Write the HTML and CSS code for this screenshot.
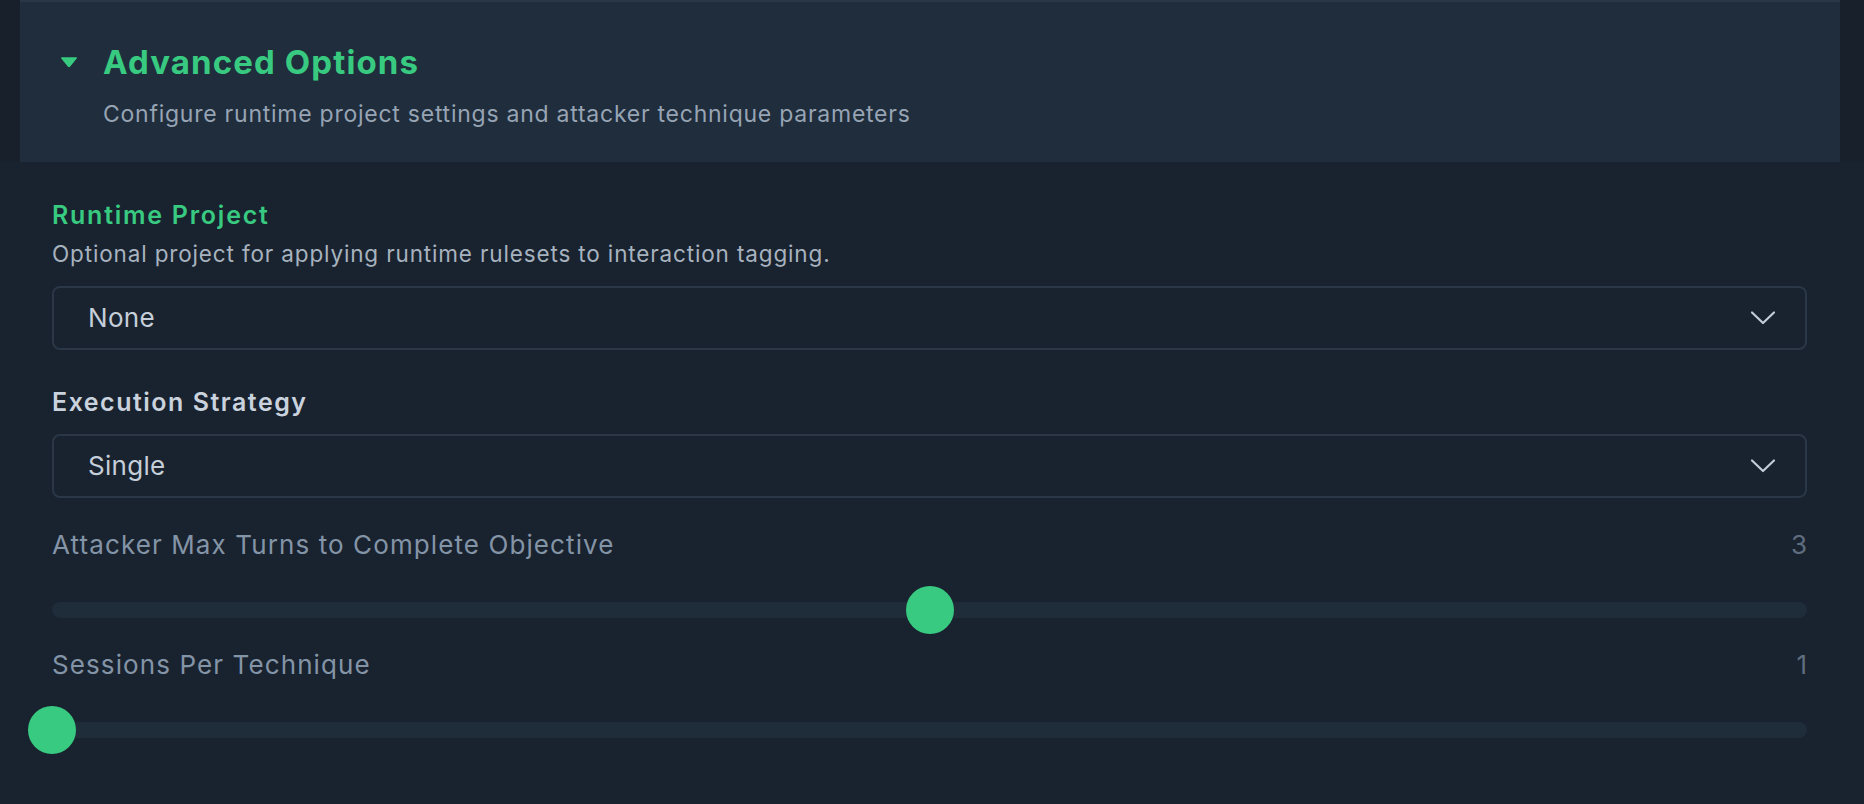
FILE: index.html
```html
<!DOCTYPE html>
<html lang="en">
<head>
<meta charset="utf-8">
<title>Advanced Options</title>
<link rel="stylesheet" href="styles.css">
</head>
<body>
<div class="page">
  <div class="header-wrap">
    <section class="header">
      <div class="header-title-row">
        <svg class="caret" width="18" height="12" viewBox="0 0 18 12" aria-hidden="true">
          <path d="M2 1.2 H16 Q17.6 1.2 16.7 2.6 L10.2 10.6 Q9 12 7.8 10.6 L1.3 2.6 Q0.4 1.2 2 1.2 Z" fill="#38ca80"/>
        </svg>
        <h2 class="title">Advanced Options</h2>
      </div>
      <p class="subtitle">Configure runtime project settings and attacker technique parameters</p>
    </section>
  </div>

  <div class="content">
    <div class="field">
      <div class="label label-accent">Runtime Project</div>
      <div class="help">Optional project for applying runtime rulesets to interaction tagging.</div>
      <div class="select">
        <span class="select-value">None</span>
        <svg class="chevron" width="26" height="16" viewBox="0 0 26 16" aria-hidden="true">
          <path d="M2 2.5 L13 13 L24 2.5" fill="none" stroke="#c3ccd7" stroke-width="2.2" stroke-linecap="round" stroke-linejoin="round"/>
        </svg>
      </div>
    </div>

    <div class="field field-exec">
      <div class="label">Execution Strategy</div>
      <div class="select select-tight">
        <span class="select-value">Single</span>
        <svg class="chevron" width="26" height="16" viewBox="0 0 26 16" aria-hidden="true">
          <path d="M2 2.5 L13 13 L24 2.5" fill="none" stroke="#c3ccd7" stroke-width="2.2" stroke-linecap="round" stroke-linejoin="round"/>
        </svg>
      </div>
    </div>

    <div class="range-field range-first">
      <div class="range-head">
        <span class="range-label">Attacker Max Turns to Complete Objective</span>
        <span class="range-value">3</span>
      </div>
      <div class="slider">
        <div class="track"></div>
        <div class="thumb" style="left: calc(50% - 24px);"></div>
      </div>
    </div>

    <div class="range-field">
      <div class="range-head">
        <span class="range-label">Sessions Per Technique</span>
        <span class="range-value">1</span>
      </div>
      <div class="slider">
        <div class="track"></div>
        <div class="thumb" style="left: calc(0% - 24px);"></div>
      </div>
    </div>
  </div>
</div>
</body>
</html>
```

FILE: styles.css
```css
* {
  box-sizing: border-box;
}

html, body {
  margin: 0;
  padding: 0;
  background: #19232f;
}

body {
  width: 1864px;
  height: 804px;
  overflow: hidden;
  font-family: Inter, "Noto Sans", "Liberation Sans", sans-serif;
}

.page {
  display: flex;
  flex-direction: column;
}

.header-wrap {
  background: #18212b;
  padding: 0 24px 0 20px;
}

.header {
  background: #1f2d3c;
  border-top: 2px solid #2a3746;
  padding: 40px 40px 33px 40px;
}

.header-title-row {
  display: flex;
  align-items: center;
  gap: 25px;
}

.caret {
  display: block;
  flex: none;
  margin-top: 0;
}

.title {
  margin: 0;
  font-size: 33px;
  line-height: 40px;
  font-weight: 700;
  color: #38ca80;
  letter-spacing: 1.1px;
}

.subtitle {
  margin: 17px 0 0 43px;
  font-size: 23px;
  line-height: 30px;
  color: #97a4b4;
  letter-spacing: 0.75px;
}

.content {
  padding: 0 57px 0 52px;
  display: flex;
  flex-direction: column;
}

.field {
  display: flex;
  flex-direction: column;
  margin-top: 37px;
}

.label {
  font-size: 25px;
  line-height: 32px;
  font-weight: 600;
  color: #c9d2dd;
  letter-spacing: 1.5px;
}

.label-accent {
  color: #38ca80;
  letter-spacing: 1.75px;
}

.help {
  margin-top: 9px;
  font-size: 22.5px;
  line-height: 28px;
  color: #a7b2bf;
  letter-spacing: 0.85px;
}

.select {
  margin-top: 18px;
  height: 64px;
  border: 2px solid #2a3747;
  border-radius: 8px;
  background: #19232f;
  display: flex;
  align-items: center;
  justify-content: space-between;
  padding: 0 29px 0 34px;
}

.select-tight {
  margin-top: 16px;
}

.select-value {
  font-size: 26px;
  line-height: 34px;
  color: #c5ced9;
  letter-spacing: 0.3px;
}

.chevron {
  display: block;
  flex: none;
}

.field-exec {
  margin-top: 36px;
}

.range-field {
  display: flex;
  flex-direction: column;
  margin-top: 14px;
}

.range-first {
  margin-top: 30px;
}

.range-head {
  display: flex;
  justify-content: space-between;
  align-items: baseline;
}

.range-label {
  font-size: 26px;
  line-height: 34px;
  color: #8494a7;
  letter-spacing: 1.1px;
}

.range-value {
  font-size: 26px;
  line-height: 34px;
  color: #5f6d7f;
}

.slider {
  position: relative;
  margin-top: 24px;
  height: 48px;
  display: flex;
  align-items: center;
}

.track {
  width: 100%;
  height: 16px;
  border-radius: 8px;
  background: #1f2c3a;
}

.thumb {
  position: absolute;
  top: 0;
  width: 48px;
  height: 48px;
  border-radius: 50%;
  background: #38ca80;
}
```
